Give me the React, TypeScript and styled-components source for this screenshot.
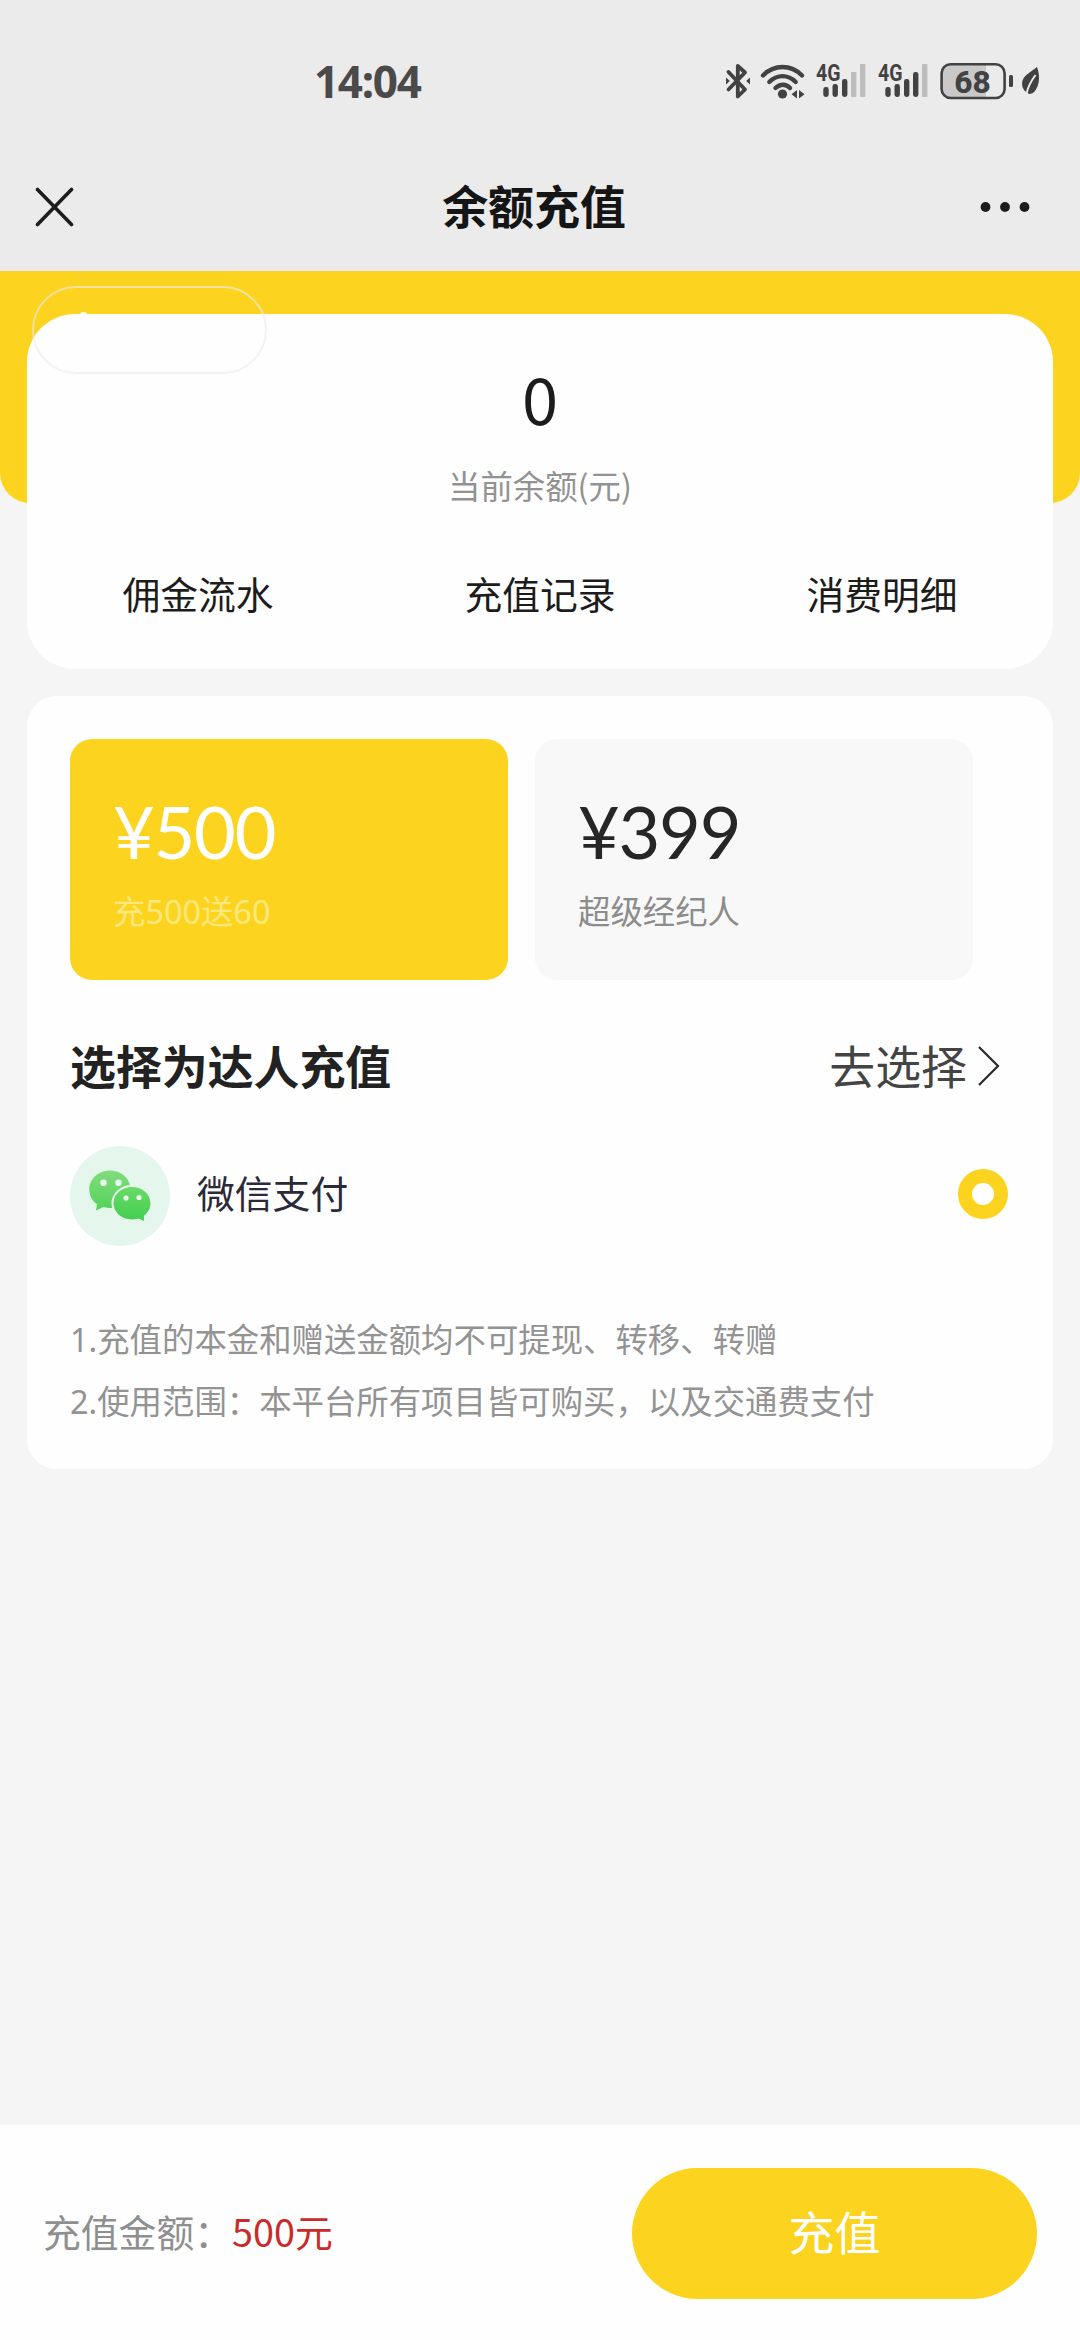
import React, { useState } from 'react';
import styled, { createGlobalStyle } from 'styled-components';

const yellow = '#fcd41f';
const cjk = '"Noto Sans CJK SC", sans-serif';

const GlobalStyle = createGlobalStyle`
  * { box-sizing: border-box; }
  body { margin: 0; background: #f5f5f5; }
  button { border: 0; padding: 0; margin: 0; background: none; font: inherit; color: inherit; text-align: left; }
`;

const Page = styled.div`
  display: flex;
  flex-direction: column;
  width: 1080px;
  height: 2340px;
  overflow: hidden;
  background: #f5f5f5;
  color: #1c1c1c;
  font-family: "Noto Sans", ${cjk};
`;

const Header = styled.header`
  flex: none;
  height: 271px;
  background: #ebebeb;
`;

const StatusBar = styled.div`
  display: flex;
  align-items: center;
  justify-content: space-between;
  height: 142px;
  padding: 20px 39px 0 314px;
`;

const Clock = styled.span`
  font: 700 44px/44px "Noto Sans", sans-serif;
  letter-spacing: -1.3px;
  color: #4a4a4a;
`;

const StatusIcons = styled.div`
  display: flex;
  align-items: center;
  color: #424242;
  svg { display: block; flex: none; }
`;

const Spacer = styled.span<{ $w: number }>`
  width: ${(p) => p.$w}px;
`;

const NavBar = styled.div`
  display: grid;
  grid-template-columns: 120px 1fr 132px;
  align-items: center;
  height: 129px;
  svg { display: block; }
`;

const NavButton = styled.button<{ $end?: boolean }>`
  display: flex;
  justify-content: ${(p) => (p.$end ? 'flex-end' : 'flex-start')};
  padding: ${(p) => (p.$end ? '0 50px 0 0' : '0 0 0 34px')};
`;

const NavTitle = styled.h1`
  margin: -6px 0 0;
  text-align: center;
  font: 700 45.9px/60px ${cjk};
  color: #151515;
`;

const Hero = styled.section`
  position: relative;
  flex: none;
  padding: 43px 27px 0;
`;

const HeroBackdrop = styled.div`
  position: absolute;
  inset: 0 0 auto;
  height: 232px;
  border-radius: 0 0 30px 30px;
  background: ${yellow};
`;

const GhostPill = styled.div`
  position: absolute;
  left: 32px;
  top: 15px;
  width: 235px;
  height: 88px;
  border: 2.5px solid rgba(235, 235, 240, 0.62);
  border-radius: 44px;
`;

const GhostDot = styled.span`
  position: absolute;
  left: 46px;
  top: 24px;
  width: 7px;
  height: 5px;
  border-radius: 50%;
  background: #fff;
`;

const BalanceCard = styled.div`
  position: relative;
  display: flex;
  flex-direction: column;
  align-items: center;
  height: 355px;
  padding-top: 43px;
  border-radius: 48px;
  background: #fefefe;
`;

const Balance = styled.div`
  font: 400 65px/80px ${cjk};
`;

const BalanceLabel = styled.div`
  margin-top: 24px;
  font: 400 32.4px/48px ${cjk};
  color: #929292;
`;

const Links = styled.nav`
  display: grid;
  grid-template-columns: repeat(3, 1fr);
  width: 100%;
  margin-top: 56px;
`;

const LinkItem = styled.button`
  text-align: center;
  font: 400 37.8px/56px ${cjk};
`;

const Panel = styled.section`
  flex: none;
  height: 773px;
  margin: 27px 27px 0;
  padding: 43px 43px 0;
  border-radius: 30px;
  background: #fefefe;
`;

const Options = styled.div`
  display: flex;
  gap: 27px;
`;

const Option = styled.button<{ $active: boolean }>`
  display: flex;
  flex-direction: column;
  justify-content: flex-start;
  width: 438px;
  height: 241px;
  padding: 48px 43px 0;
  border-radius: 22px;
  background: ${(p) => (p.$active ? yellow : '#f8f8f8')};
  color: ${(p) => (p.$active ? '#fff' : '#262626')};
`;

const Price = styled.div`
  font: 400 72px/88px Lato, sans-serif;
  letter-spacing: -1.2px;
`;

const OptionNote = styled.div<{ $active: boolean }>`
  margin-top: 12px;
  font: 400 32.4px/48px "Noto Sans", ${cjk};
  color: ${(p) => (p.$active ? '#fde87c' : '#8c8c8c')};
`;

const SelectRow = styled.div`
  display: flex;
  align-items: center;
  justify-content: space-between;
  height: 66px;
  margin-top: 51px;
  padding-right: 10px;
`;

const SelectTitle = styled.h2`
  margin: 0;
  font: 700 45.9px/66px ${cjk};
  color: #222;
`;

const SelectAction = styled.button`
  display: flex;
  align-items: center;
  gap: 9px;
  font: 400 45.9px/66px ${cjk};
  color: #444;
  svg { position: relative; top: 2px; }
`;

const PayRow = styled.div`
  display: flex;
  align-items: center;
  height: 100px;
  margin-top: 49px;
  svg { display: block; }
`;

const PayName = styled.span`
  flex: 1;
  margin: -8px 0 0 27px;
  font: 400 37.8px/56px ${cjk};
  color: #2a2a38;
`;

const Radio = styled.span`
  width: 50px;
  height: 50px;
  margin: -5px 2px 0 0;
  border: 14px solid ${yellow};
  border-radius: 50%;
  background: #fff;
`;

const Notes = styled.ol`
  margin: 62px 0 0;
  padding: 0;
  list-style: none;
  font: 400 32.4px/62px "Noto Sans", ${cjk};
  color: #939393;
  white-space: nowrap;
`;

const Note = styled.li`
  height: 62px;
`;

const Footer = styled.footer`
  display: flex;
  align-items: flex-start;
  justify-content: space-between;
  height: 215px;
  margin-top: auto;
  padding: 43px 43px 0;
  background: #fefefe;
`;

const Total = styled.div`
  font: 400 37.8px/126px ${cjk};
  color: #8f8f8f;
`;

const Amount = styled.span`
  color: #cb2a2a;
`;

const Submit = styled.button`
  width: 405px;
  height: 131px;
  padding-bottom: 8px;
  border-radius: 66px;
  background: ${yellow};
  color: #fff;
  text-align: center;
  font: 400 45.9px/60px ${cjk};
`;

const Bluetooth = () => (
  <svg width="26" height="38" viewBox="0 0 26 38" fill="none" stroke="currentColor" strokeWidth="3.8" strokeLinejoin="round" strokeLinecap="round">
    <path d="M3.5 10 20 27.5 12.8 34.5V3.8L20 10.5 3.5 27.5" />
    <path d="M1 15.5 4.8 19 1 22.5ZM25 15.5 21.2 19 25 22.5Z" fill="currentColor" stroke="none" />
  </svg>
);

const Wifi = () => (
  <svg width="46" height="38" viewBox="0 0 46 38" fill="none" stroke="currentColor" strokeWidth="4.4" strokeLinecap="round">
    <path d="M3 13.5C14 2.2 31 2.2 42 13.5" />
    <path d="M9.3 20C17 12.2 28 12.2 35.7 20" />
    <path d="M15.5 26C20 21.6 26 21.6 30 26" />
    <circle cx="22.5" cy="32" r="4.6" fill="currentColor" stroke="none" />
    <path d="M37 28v8.500L31.500 32.200ZM39 28v8.500L44.500 32.200Z" fill="currentColor" stroke="none" />
  </svg>
);

const bars = [
  { x: 7.3, y: 25 },
  { x: 16.5, y: 22 },
  { x: 26, y: 17 },
  { x: 35, y: 10 },
  { x: 44, y: 2 },
];

const Signal = ({ level }: { level: number }) => (
  <svg width="50" height="54" viewBox="0 -8 50 54" fill="currentColor">
    {bars.map((b, i) => (
      <rect key={b.x} x={b.x} y={b.y} width="5.4" height={35 - b.y} rx={i < level ? 2.4 : 0.8} fill={i < level ? 'currentColor' : '#bdbdbd'} />
    ))}
    <text x="0" y="18.500" fontFamily="Roboto, sans-serif" fontWeight="700" fontSize="23.500" textLength="24.500" lengthAdjust="spacingAndGlyphs">4G</text>
  </svg>
);

const Battery = () => (
  <svg width="74" height="38" viewBox="0 0 74 38">
    <clipPath id="charge"><rect x="0" y="0" width="46" height="38" /></clipPath>
    <rect x="1.600" y="2.200" width="63" height="33.800" rx="9" fill="#c9c9c9" clipPath="url(#charge)" />
    <rect x="1.600" y="2.200" width="63" height="33.800" rx="9" fill="none" stroke="currentColor" strokeWidth="2.600" />
    <rect x="69" y="13" width="4" height="12" rx="1.500" fill="currentColor" />
    <text x="32.500" y="30.500" textAnchor="middle" fill="currentColor" fontFamily="Roboto, sans-serif" fontWeight="800" fontSize="32" textLength="36.500" lengthAdjust="spacingAndGlyphs">68</text>
  </svg>
);

const Leaf = () => (
  <svg width="20" height="30" viewBox="0 0 20 30">
    <path d="M16 1C19 9 19 18 14 25c-1.500 2-3.500 3-6 3-3-2-7-4-7-11C2 9 10 6 16 1Z" fill="currentColor" />
    <path d="M14.500 9C10 15 7 20 5.500 28" fill="none" stroke="#ebebeb" strokeWidth="2" />
  </svg>
);

const WeChatBadge = () => (
  <svg width="100" height="100" viewBox="0 0 100 100">
    <defs>
      <linearGradient id="back" x1="0" y1="0" x2="0" y2="1">
        <stop offset="0" stopColor="#82dc7c" />
        <stop offset="1" stopColor="#52d35a" />
      </linearGradient>
      <linearGradient id="front" x1="0" y1="0" x2="0" y2="1">
        <stop offset="0" stopColor="#6cd968" />
        <stop offset="1" stopColor="#3fd04e" />
      </linearGradient>
    </defs>
    <circle cx="50" cy="50" r="50" fill="#e5f7ec" />
    <path d="M40 24.500c11.500 0 20.500 8.300 20.500 18.700S51.500 62 40 62c-2.300 0-4.500-.3-6.500-.9L26 64.500l1.200-6.200C22.300 55 19.300 49.500 19.300 43.200 19.300 32.800 28.500 24.500 40 24.500Z" fill="url(#back)" />
    <path d="M62 41c10.300 0 18.500 7.200 18.500 16.200 0 5-2.600 9.600-6.600 12.500l.1 5.300-5.500-2.600c-2 .6-4.200 1-6.500 1-10.300 0-18.500-7.200-18.500-16.200S51.700 41 62 41Z" fill="url(#front)" stroke="#e5f7ec" strokeWidth="4" paintOrder="stroke" />
    <g fill="#e9faee">
      <circle cx="33.500" cy="36.800" r="3.200" />
      <circle cx="48.500" cy="36.800" r="3.200" />
      <circle cx="56" cy="52" r="2.600" />
      <circle cx="69" cy="51.500" r="2.600" />
    </g>
  </svg>
);

const options = [
  { price: 500, note: '充500送60' },
  { price: 399, note: '超级经纪人' },
];

export default function App() {
  const [selected, setSelected] = useState(0);
  return (
    <Page>
      <GlobalStyle />
      <Header>
        <StatusBar>
          <Clock>14:04</Clock>
          <StatusIcons>
            <Bluetooth />
            <Spacer $w={9} />
            <Wifi />
            <Spacer $w={10} />
            <Signal level={3} />
            <Spacer $w={12} />
            <Signal level={4} />
            <Spacer $w={12} />
            <Battery />
            <Spacer $w={7} />
            <Leaf />
          </StatusIcons>
        </StatusBar>
        <NavBar>
          <NavButton aria-label="关闭">
            <svg width="41" height="40" viewBox="0 0 41 40" stroke="#1c1c1c" strokeWidth="3.600" strokeLinecap="round">
              <path d="M3.500 2.500 37.500 37.500M37.500 2.500 3.500 37.500" />
            </svg>
          </NavButton>
          <NavTitle>余额充值</NavTitle>
          <NavButton $end aria-label="更多">
            <svg width="50" height="12" viewBox="0 0 50 12" fill="#1c1c1c">
              <circle cx="5.500" cy="6" r="4.900" />
              <circle cx="25" cy="6" r="4.900" />
              <circle cx="44.500" cy="6" r="4.900" />
            </svg>
          </NavButton>
        </NavBar>
      </Header>

      <Hero>
        <HeroBackdrop />
        <BalanceCard>
          <Balance>0</Balance>
          <BalanceLabel>当前余额(元)</BalanceLabel>
          <Links>
            <LinkItem>佣金流水</LinkItem>
            <LinkItem>充值记录</LinkItem>
            <LinkItem>消费明细</LinkItem>
          </Links>
        </BalanceCard>
        <GhostPill>
          <GhostDot />
        </GhostPill>
      </Hero>

      <Panel>
        <Options>
          {options.map((o, i) => (
            <Option key={o.price} $active={i === selected} onClick={() => setSelected(i)}>
              <Price>¥{o.price}</Price>
              <OptionNote $active={i === selected}>{o.note}</OptionNote>
            </Option>
          ))}
        </Options>
        <SelectRow>
          <SelectTitle>选择为达人充值</SelectTitle>
          <SelectAction>
            去选择
            <svg width="24" height="42" viewBox="0 0 24 42" fill="none" stroke="#2a2a2a" strokeWidth="2.200">
              <path d="M3 2 22 21 3 40" />
            </svg>
          </SelectAction>
        </SelectRow>
        <PayRow>
          <WeChatBadge />
          <PayName>微信支付</PayName>
          <Radio />
        </PayRow>
        <Notes>
          <Note>1.充值的本金和赠送金额均不可提现、转移、转赠</Note>
          <Note>2.使用范围：本平台所有项目皆可购买，以及交通费支付</Note>
        </Notes>
      </Panel>

      <Footer>
        <Total>
          充值金额：<Amount>{options[selected].price}元</Amount>
        </Total>
        <Submit>充值</Submit>
      </Footer>
    </Page>
  );
}
